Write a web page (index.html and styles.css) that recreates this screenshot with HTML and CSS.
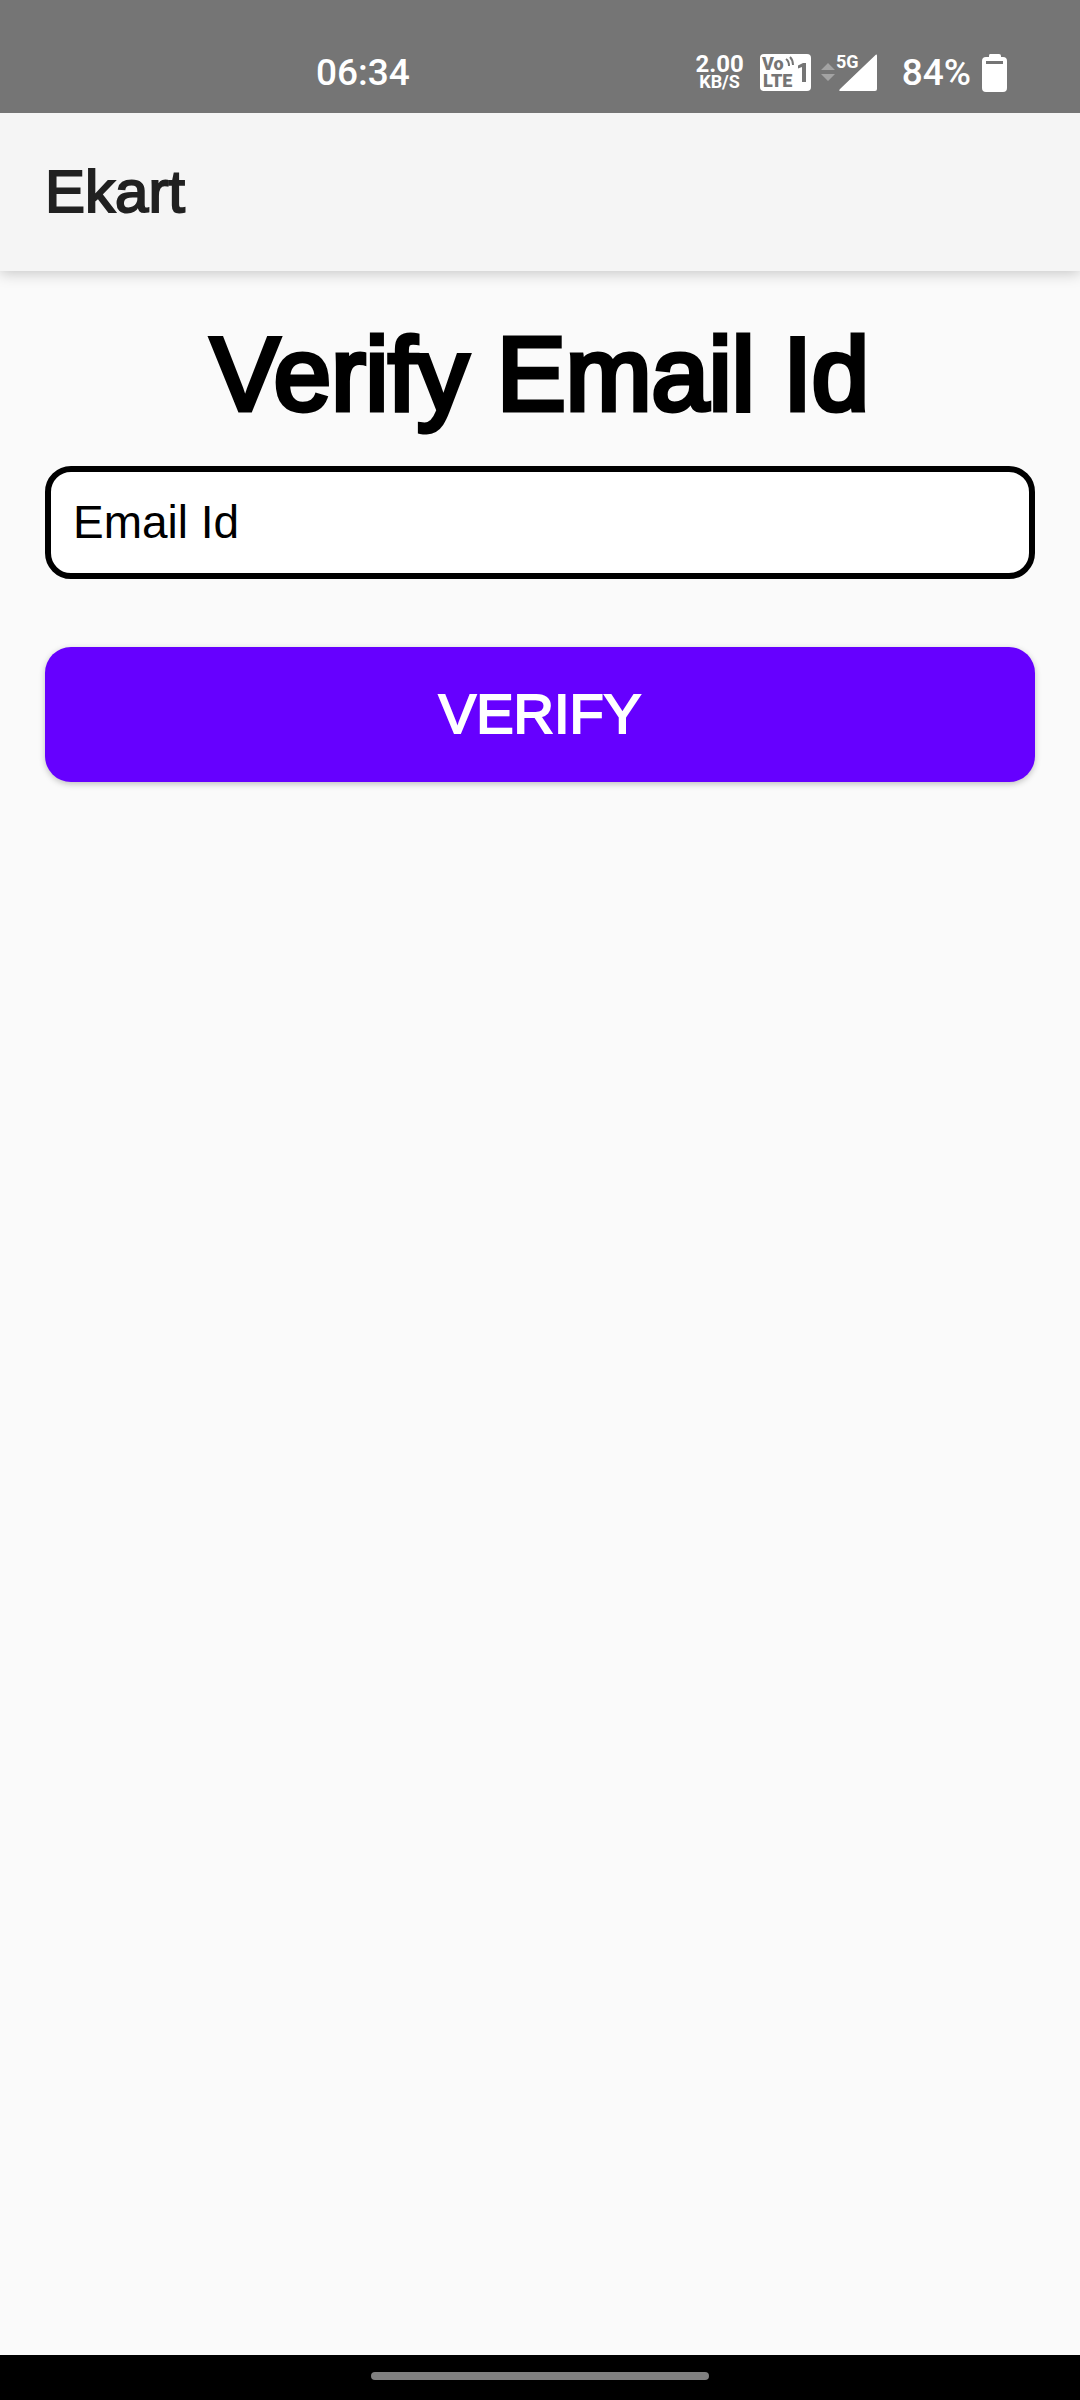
FILE: index.html
```html
<!DOCTYPE html>
<html lang="en">
<head>
<meta charset="utf-8">
<meta name="viewport" content="width=device-width, initial-scale=1">
<title>Ekart</title>
<link rel="stylesheet" href="styles.css">
</head>
<body>
<div class="status">
  <time class="clock">06:34</time>
  <div class="indicators">
    <div class="speed"><span class="rate">2.00</span><span class="unit">KB/S</span></div>
    <svg class="volte" width="51" height="37" viewBox="0 0 51 37" role="img" aria-label="VoLTE 1">
      <rect width="51" height="37" rx="4" fill="#fff"/>
      <g class="badge-text">
        <text x="2" y="16" font-size="18">Vo</text>
        <text x="3" y="33" font-size="18">LTE</text>
      </g>
      <path d="M38 14.500V11.500L43 9h3v19h-4V13z" fill="#757575"/>
      <path d="M26 5q3 2 3 7M30 3q3 3 3 8" fill="none" stroke="#757575" stroke-width="2"/>
    </svg>
    <svg class="signal" width="57" height="40" viewBox="0 0 57 40" role="img" aria-label="5G signal">
      <path d="M7 10l7 7H0zM0 21h14l-7 7z" fill="#a3a3a3"/>
      <path d="M54 2.500q2-2 2 .5V36q0 2-2 2H20q-3 0-1-2z" fill="#fff"/>
      <text class="network" x="15" y="15" font-size="18">5G</text>
    </svg>
    <span class="percent">84%</span>
    <svg class="battery" width="25" height="38" viewBox="0 0 25 38" role="img" aria-label="Battery">
      <path d="M8 0h9q2 0 2 2v1h2q4 0 4 4v27q0 4-4 4H4q-4 0-4-4V7q0-4 4-4h3V2q0-2 1-2z" fill="#fff"/>
      <path d="M4 7h17v3H4z" fill="#757575"/>
    </svg>
  </div>
</div>
<header class="app-bar"><span class="app-name">Ekart</span></header>
<main class="content">
  <h1 class="title">Verify Email Id</h1>
  <form class="form">
    <input class="field" type="email" placeholder="Email Id" aria-label="Email Id">
    <button class="submit" type="button">VERIFY</button>
  </form>
</main>
<div class="nav"><div class="handle"></div></div>
</body>
</html>
```

FILE: styles.css
```css
* {
  box-sizing: border-box;
}

body {
  margin: 0;
  min-height: 100vh;
  display: flex;
  flex-direction: column;
  background: #fafafa;
  color: #000;
  font-family: "Liberation Sans", Arial, sans-serif;
}

.status {
  position: relative;
  z-index: 1;
  display: flex;
  justify-content: space-between;
  align-items: center;
  height: 113px;
  padding: 32px 73px 0 316px;
  background: #757575;
  color: #fff;
  font-family: Roboto, sans-serif;
  font-weight: 500;
}

.clock,
.percent {
  font-size: 37px;
  line-height: 40px;
}

.indicators {
  display: flex;
  align-items: center;
}

.speed {
  display: flex;
  flex-direction: column;
  align-items: center;
  margin-right: 16px;
  font-weight: 700;
}

.rate {
  font-size: 24px;
  line-height: 18px;
}

.unit {
  font-size: 18px;
  line-height: 18px;
}

.badge-text {
  fill: #757575;
  font-weight: 900;
}

.network {
  fill: #fff;
  stroke: #757575;
  stroke-width: 3px;
  paint-order: stroke;
  font-weight: 700;
}

.signal {
  margin-left: 10px;
  overflow: visible;
}

.percent {
  margin-left: 24px;
  margin-right: 11px;
}

.app-bar {
  display: flex;
  align-items: center;
  height: 158px;
  padding: 0 45px 2px;
  background: #f5f5f5;
  box-shadow: 0 2px 14px rgba(0, 0, 0, 0.22);
}

.app-name {
  color: #212121;
  font-size: 60px;
  -webkit-text-stroke: 2px #212121;
}

.content {
  flex: 1;
  padding: 45px 45px 0;
}

/* Heavy weight built on the regular face, which keeps the letters tall and narrow. */
.title {
  margin: 0;
  font-size: 103px;
  font-weight: 400;
  line-height: 118px;
  text-align: center;
  -webkit-text-stroke: 5px #000;
}

.form {
  display: flex;
  flex-direction: column;
  gap: 68px;
  margin-top: 32px;
}

.field {
  width: 100%;
  height: 113px;
  padding: 0 22px 2px;
  border: 6px solid #000;
  border-radius: 26px;
  background: #fff;
  color: #000;
  font-family: inherit;
  font-size: 46px;
}

.field::placeholder {
  color: #000;
  opacity: 1;
}

.submit {
  height: 135px;
  padding: 0 0 2px;
  border: 0;
  border-radius: 26px;
  background: #6600ff;
  box-shadow: 0 2px 6px rgba(0, 0, 0, 0.24);
  color: #fff;
  font-family: inherit;
  font-size: 56px;
  -webkit-text-stroke: 2px #fff;
}

.nav {
  display: flex;
  justify-content: center;
  height: 45px;
  padding-top: 17px;
  background: #000;
}

.handle {
  width: 338px;
  height: 8px;
  border-radius: 4px;
  background: #808080;
}
```
